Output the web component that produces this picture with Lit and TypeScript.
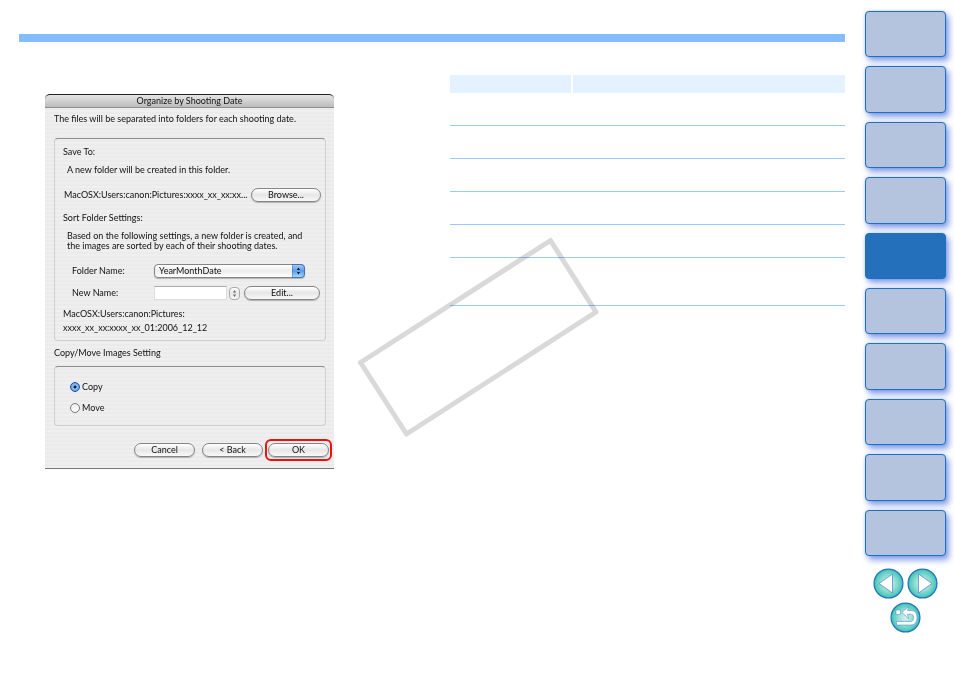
import { LitElement, html, css } from "lit";
import { customElement, property, state } from "lit/decorators.js";
import { classMap } from "lit/directives/class-map.js";

@customElement("chapter-nav")
class ChapterNav extends LitElement {
  @property({ type: Number }) current = 4;

  static styles = css`
    :host { display: block; }
    .chapters { display: grid; grid-auto-rows: 1fr; gap: 9px; height: 545px; }
    .chapter {
      display: block;
      box-sizing: border-box;
      border: 1px solid #1e70c4;
      border-radius: 4px;
      background: #b4c4df;
      box-shadow: 3px 4px 6px rgba(50, 95, 215, 0.6), 0 0 3px rgba(90, 130, 230, 0.35);
    }
    .current { background: #2570bb; }
    .pager { display: flex; flex-wrap: wrap; justify-content: center; gap: 3px; margin-top: 12px; }
    .pager a { display: block; height: 31px; }
    svg { display: block; width: 31px; height: 31px; }
  `;

  render() {
    return html`
      <nav class="chapters" aria-label="Chapters">
        ${Array.from({ length: 10 }, (_, i) => html`
          <a href="#chapter-${i + 1}" aria-label="Chapter ${i + 1}"
            class=${classMap({ chapter: true, current: i === this.current })}></a>`)}
      </nav>
      <nav class="pager" aria-label="Pages">
        <a href="#previous" aria-label="Previous page">
          <svg viewBox="0 0 31 31">
            <defs><radialGradient id="g"><stop offset="0" stop-color="#d5f2ee" /><stop offset=".5" stop-color="#96dfd6" /><stop offset="1" stop-color="#3fc2b6" /></radialGradient></defs>
            <circle cx="15.5" cy="15.5" r="14.4" fill="url(#g)" stroke="#2475b8" stroke-width="1.3" />
            <path d="M19.500 6 V25 L6 15.500Z" fill="#fff" stroke="#5b8fcd" stroke-width=".8" />
          </svg>
        </a>
        <a href="#next" aria-label="Next page">
          <svg viewBox="0 0 31 31">
            <defs><radialGradient id="h"><stop offset="0" stop-color="#d5f2ee" /><stop offset=".5" stop-color="#96dfd6" /><stop offset="1" stop-color="#3fc2b6" /></radialGradient></defs>
            <circle cx="15.5" cy="15.5" r="14.4" fill="url(#h)" stroke="#2475b8" stroke-width="1.3" />
            <path d="M11.500 6 V25 L25 15.500Z" fill="#fff" stroke="#5b8fcd" stroke-width=".8" />
          </svg>
        </a>
        <a href="#return" aria-label="Return to previous view">
          <svg viewBox="0 0 31 31">
            <defs><radialGradient id="k"><stop offset="0" stop-color="#d5f2ee" /><stop offset=".5" stop-color="#96dfd6" /><stop offset="1" stop-color="#3fc2b6" /></radialGradient></defs>
            <circle cx="15.5" cy="15.5" r="14.4" fill="url(#k)" stroke="#2475b8" stroke-width="1.3" />
            <rect x="6" y="8" width="4.500" height="4.500" fill="#fff" stroke="#5b8fcd" stroke-width=".6" />
            <path d="M12 10.500 L18.500 4.500 L17.500 8.500 H21 C25 8.500 27 11 27 15.500 C27 20 25 23 21 23 H6.500 V19.500 H20.500 C22.800 19.500 23.500 18 23.500 15.500 C23.500 13 22.500 12.200 20.500 12.200 H17.500 L18.500 16.500Z" fill="#fff" stroke="#5b8fcd" stroke-width=".6" />
          </svg>
        </a>
      </nav>`;
  }
}

@customElement("sort-dialog")
class SortDialog extends LitElement {
  @state() action = "copy";

  static styles = css`
    :host { display: block; color: #111; font: 9px/10px "Lato", "Open Sans", sans-serif; }
    .dialog {
      background: repeating-linear-gradient(#efefef 0 2px, #ebebeb 2px 4px);
      border-bottom: 1px solid #777;
      border-radius: 5px 5px 0 0;
    }
    .title {
      margin: 0;
      border-top: 1px solid #222;
      border-bottom: 1px solid #8f8f8f;
      border-radius: 5px 5px 0 0;
      background: linear-gradient(#e6e6e6, #bcbcbc);
      font: inherit;
      line-height: 12px;
      text-align: center;
    }
    .body { padding: 6px 8px 7px 9px; }
    p, h3 { margin: 0; font: inherit; white-space: nowrap; }
    .panel {
      box-sizing: border-box;
      border: 1px solid #cfcfcf;
      border-top-color: #8c8c8c;
      border-radius: 4px;
    }
    .folders { margin-top: 14px; padding: 8px 4px 5px 8px; }
    .note { padding-left: 4px; }
    .gap { margin-top: 8px; }
    .row { display: flex; align-items: center; }
    .location { margin-top: 13px; justify-content: space-between; }
    .location p { padding-left: 1px; }
    .sort { margin-top: 11px; }
    .field { padding-left: 9px; margin-top: 13px; }
    .field + .field { margin-top: 8px; }
    .field label { width: 82px; }
    .result { margin-top: 7px; line-height: 14px; }
    .section { margin-top: 7px; }
    .actions { margin-top: 8px; padding: 15px 15px 12px; display: grid; gap: 11px; }
    .actions label { display: flex; align-items: center; gap: 2px; }
    button {
      box-sizing: border-box;
      width: 61px;
      height: 14px;
      padding: 0;
      border: 1px solid #858585;
      border-radius: 7px;
      background: linear-gradient(#fff, #e6e6e6 50%, #f9f9f9);
      box-shadow: 0 1px 1px rgba(0, 0, 0, 0.25);
      color: inherit;
      font: inherit;
    }
    .location button { width: 70px; }
    .select { position: relative; width: 151px; height: 14px; }
    select {
      appearance: none;
      box-sizing: border-box;
      width: 100%;
      height: 14px;
      padding: 0 4px;
      border: 1px solid #858585;
      border-radius: 4px;
      background: linear-gradient(#fff, #ececec 50%, #fff);
      box-shadow: 0 1px 1px rgba(0, 0, 0, 0.25);
      color: inherit;
      font: inherit;
    }
    .arrows { position: absolute; right: 0; top: 0; width: 13px; height: 14px; pointer-events: none; }
    input[type="text"] {
      box-sizing: border-box;
      width: 73px;
      height: 14px;
      padding: 0 3px;
      border: 1px solid #dcdcdc;
      border-top-color: #aaa;
      background: #fff;
      font: inherit;
    }
    .field .stepper { width: 11px; height: 13px; margin: 0 4px 0 2px; border-radius: 4px; border-color: #aaa; box-shadow: none; }
    .stepper svg { display: block; width: 9px; height: 11px; }
    .edit { width: 76px; }
    input[type="radio"] {
      appearance: none;
      box-sizing: border-box;
      width: 10px;
      height: 10px;
      margin: 0;
      border: 1px solid #777;
      border-radius: 50%;
      background: linear-gradient(#eee, #fff);
    }
    input[type="radio"]:checked {
      border-color: #27509b;
      background: radial-gradient(circle, #10204e 0 1px, #8fc4f4 2px, #4e8fdb 5px);
    }
    .footer { display: flex; justify-content: flex-end; align-items: center; gap: 7px; margin-top: 13px; }
    .marked {
      margin: 0 -6px 0 -5px;
      padding: 2px 1px;
      border: 2px solid #f01010;
      border-radius: 6px;
    }
    .marked button { display: block; }
  `;

  render() {
    return html`
      <section class="dialog" aria-labelledby="title">
        <h2 class="title" id="title">Organize by Shooting Date</h2>
        <div class="body">
          <p>The files will be separated into folders for each shooting date.</p>
          <div class="panel folders">
            <h3>Save To:</h3>
            <p class="note gap">A new folder will be created in this folder.</p>
            <div class="row location">
              <p>MacOSX:Users:canon:Pictures:xxxx_xx_xx:xx...</p>
              <button>Browse...</button>
            </div>
            <h3 class="sort">Sort Folder Settings:</h3>
            <p class="note gap">Based on the following settings, a new folder is created, and<br />the images are sorted by each of their shooting dates.</p>
            <div class="row field">
              <label for="folder">Folder Name:</label>
              <div class="select">
                <select id="folder"><option>YearMonthDate</option></select>
                <svg class="arrows" viewBox="0 0 13 14">
                  <defs><linearGradient id="blue" x2="0" y2="1"><stop stop-color="#a9cdf6" /><stop offset=".5" stop-color="#5a9be8" /><stop offset="1" stop-color="#a8e0ff" /></linearGradient></defs>
                  <path d="M0 .5H9Q12.500 .5 12.500 4V10Q12.500 13.500 9 13.500H0Z" fill="url(#blue)" stroke="#4573b4" />
                  <path d="M5 6L6.500 3.500L8 6ZM5 8L6.500 10.500L8 8Z" fill="#112" />
                </svg>
              </div>
            </div>
            <div class="row field">
              <label for="name">New Name:</label>
              <input id="name" type="text" />
              <button class="stepper" aria-label="Insert field">
                <svg viewBox="0 0 9 11"><path d="M3 4.500L4.500 2L6 4.500ZM3 6.500L4.500 9L6 6.500Z" fill="#666" /></svg>
              </button>
              <button class="edit">Edit...</button>
            </div>
            <p class="result">MacOSX:Users:canon:Pictures:<br />xxxx_xx_xx:xxxx_xx_01:2006_12_12</p>
          </div>
          <h3 class="section">Copy/Move Images Setting</h3>
          <div class="panel actions" role="radiogroup" aria-label="Copy/Move Images Setting">
            <label><input type="radio" name="action" .checked=${this.action === "copy"} @change=${() => (this.action = "copy")} />Copy</label>
            <label><input type="radio" name="action" .checked=${this.action === "move"} @change=${() => (this.action = "move")} />Move</label>
          </div>
          <div class="footer">
            <button>Cancel</button>
            <button>&lt; Back</button>
            <div class="marked"><button>OK</button></div>
          </div>
        </div>
      </section>`;
  }
}

@customElement("app-root")
class AppRoot extends LitElement {
  static styles = css`
    :host { display: block; background: #fff; }
    .page { display: flex; position: relative; padding: 11px 8px 11px 19px; gap: 20px; }
    main { flex: 1; min-width: 0; }
    .rule { height: 8px; margin-top: 23px; background: #84bdff; }
    .columns { display: grid; grid-template-columns: 289px 1fr; gap: 116px; padding-left: 26px; margin-top: 33px; align-items: start; }
    sort-dialog { margin-top: 19px; }
    chapter-nav { width: 81px; }
    table { width: 100%; border-collapse: separate; border-spacing: 0; table-layout: fixed; }
    th { height: 18px; padding: 0; background: #e4f1ff; }
    th:first-child { width: 121px; border-right: 2px solid #fff; }
    td { height: 32px; padding: 0; border-bottom: 1px solid #99c8fb; }
    .tall td { height: 47px; }
    .stamp { position: absolute; left: 350px; top: 230px; width: 260px; height: 215px; mix-blend-mode: multiply; pointer-events: none; }
  `;

  render() {
    return html`
      <div class="page">
        <main>
          <div class="rule"></div>
          <div class="columns">
            <sort-dialog></sort-dialog>
            <table aria-label="Settings">
              <thead><tr><th></th><th></th></tr></thead>
              <tbody>
                ${[0, 1, 2, 3, 4, 5].map((i) => html`<tr class=${classMap({ tall: i === 5 })}><td></td><td></td></tr>`)}
              </tbody>
            </table>
          </div>
        </main>
        <chapter-nav></chapter-nav>
        <svg class="stamp" viewBox="0 0 260 215" aria-hidden="true">
          <path d="M10.500 132.500L200.500 10.500L246 82L56.500 204Z" fill="none" stroke="#d9d9d9" stroke-width="5" stroke-linejoin="round" />
        </svg>
      </div>`;
  }
}
